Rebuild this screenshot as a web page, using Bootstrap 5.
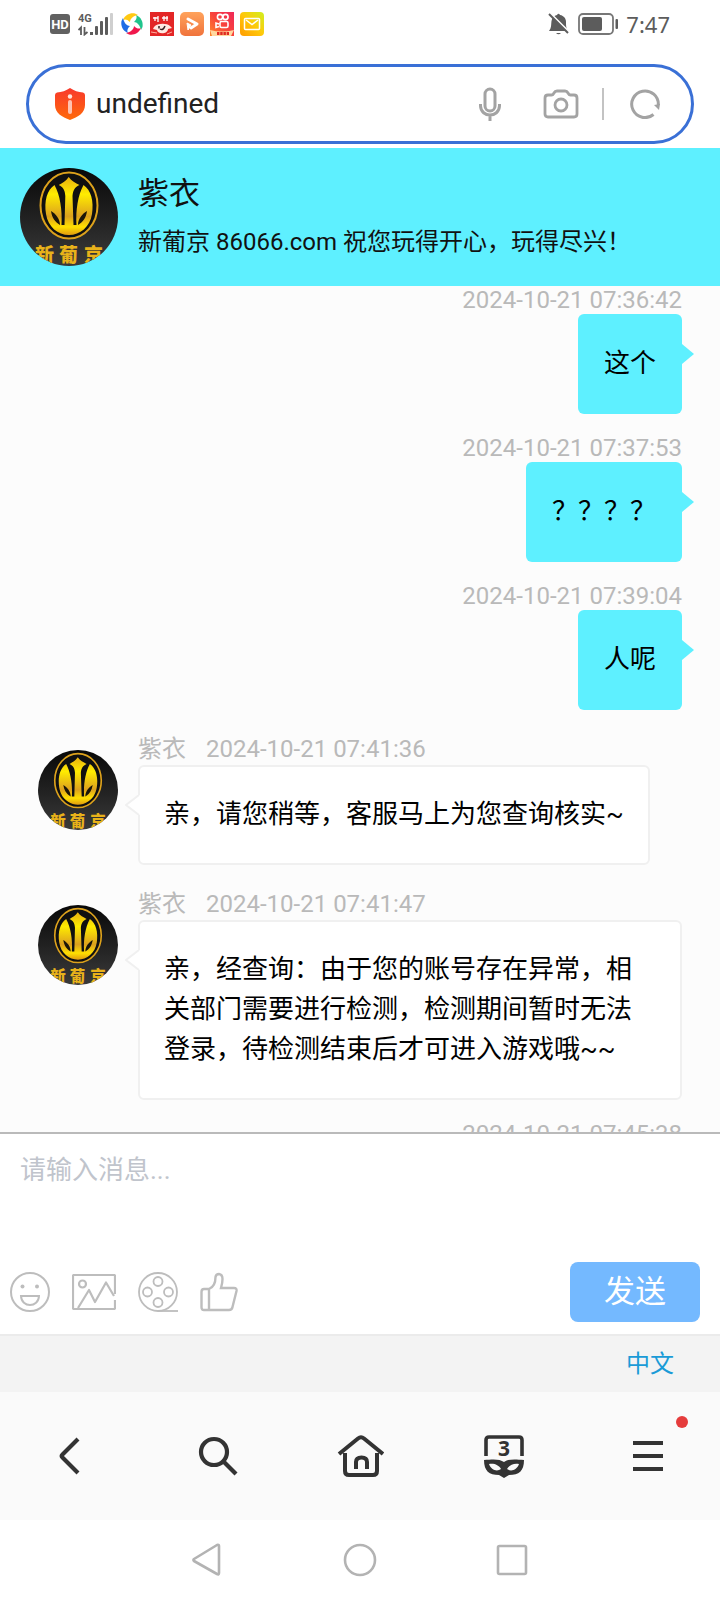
<!DOCTYPE html>
<html lang="zh-CN">
<head>
<meta charset="utf-8">
<meta name="viewport" content="width=device-width, initial-scale=1">
<title>紫衣</title>
<link href="https://cdn.jsdelivr.net/npm/bootstrap@5.3.0/dist/css/bootstrap.min.css" rel="stylesheet">
<style>
  body { font-family: Roboto, "Noto Sans CJK SC", sans-serif; color: #111; background: #fff; }
  svg { display: block; flex: none; }
  button { color: inherit; }
  .status-bar { height: 48px; padding: 0 50px; }
  .status-time { font: 22px/24px "Noto Sans", sans-serif; color: #5c5c5c; }
  .signal-icon { margin-right: 2px; }
  .app-icons { gap: 6px; }
  .address-bar { height: 80px; margin: 16px 26px 4px; padding: 0 31px 0 25px; border: 3px solid #3a70d6; border-radius: 40px; }
  .address-bar input { font-size: 28px; line-height: 40px; color: #222; outline: 0; min-width: 0; margin-left: 10px; }
  .address-bar .cam { margin-left: 41px; }
  .address-bar .vr { width: 2px; height: 32px; margin: 0 26px 0 23px; align-self: center; }
  .agent-head { background: #5ef0ff; padding: 20px; gap: 20px; }
  .agent-text { padding-top: 6px; }
  .agent-name { font-size: 31px; line-height: 40px; margin-bottom: 12px; font-weight: 400; }
  .agent-note { font-size: 24px; line-height: 32px; margin: 0; }
  .chat-pane { background: #fcfcfc; padding: 0 38px; min-height: 0; overflow-y: auto; scrollbar-width: none; }
  .chat-pane::-webkit-scrollbar { display: none; }
  .msg-out, .msg-in { margin-bottom: 20px; }
  .stamp { font-size: 24px; line-height: 28px; color: #b9b9b9; white-space: nowrap; }
  .msg-in { gap: 20px; }
  .msg-in .avatar { margin-top: 20px; }
  .msg-in .stamp { line-height: 31px; padding-top: 4px; }
  .stamp span { margin-right: 20px; }
  .bubble { position: relative; font-size: 26px; line-height: 40px; border-radius: 6px; padding: 29px 26px 31px; color: #000; }
  .msg-out .bubble { background: #5ef0ff; }
  .msg-out .bubble::after { content: ""; position: absolute; left: 100%; top: 30px; border: 10px solid transparent; border-left: 12px solid #5ef0ff; border-right: 0; }
  .msg-in .bubble { background: #fff; border: 2px solid #f0f0f0; padding: 27px 24px 29px; }
  .tail { position: absolute; right: 100%; top: 28px; }
  .composer { border-top: 2px solid #bababa; border-bottom: 2px solid #ebebeb; }
  .composer textarea { height: 118px; padding: 16px 20px; font-size: 26px; line-height: 40px; resize: none; outline: 0; }
  .composer textarea::placeholder { color: #c0c4cc; opacity: 1; }
  .tool-row { padding: 10px 20px 12px 10px; }
  .tool-icons { gap: 22px; }
  .btn-send { width: 130px; height: 60px; padding: 0; border-radius: 8px; font-size: 31px; line-height: 60px; --bs-btn-bg: #74b9ff; --bs-btn-color: #fff; --bs-btn-border-width: 0; --bs-btn-hover-bg: #5daaf8; --bs-btn-hover-color: #fff; }
  .lang-bar { height: 56px; background: #f3f3f3; padding: 0 46px; }
  .lang-bar a { font-size: 24px; line-height: 36px; color: #1a9bd7; }
  .browser-nav { height: 128px; background: #fafafa; }
  .browser-nav .dot { position: absolute; left: 50%; top: 24px; margin-left: 28px; width: 12px; height: 12px; background: #e53c3c; }
  .system-nav { height: 80px; gap: 118px; }
</style>
</head>
<body>
<svg width="0" height="0" class="position-absolute" aria-hidden="true">
  <defs>
    <linearGradient id="night" x1="0" y1="0" x2="0" y2="1"><stop offset="0" stop-color="#080808"/><stop offset="1" stop-color="#3a3a3a"/></linearGradient>
    <linearGradient id="gold" x1="0" y1="0" x2="0" y2="1"><stop offset="0" stop-color="#e8b010"/><stop offset=".3" stop-color="#ffec00"/><stop offset=".68" stop-color="#dca01e"/><stop offset=".86" stop-color="#ffe000"/><stop offset="1" stop-color="#e09a10"/></linearGradient>
    <clipPath id="disc"><circle cx="49" cy="49" r="49"/></clipPath>
    <symbol id="logo" viewBox="0 0 98 98">
      <g clip-path="url(#disc)">
        <rect width="98" height="98" fill="url(#night)"/>
        <ellipse cx="49" cy="37.500" rx="28.500" ry="33" fill="#101010" stroke="#dda21c" stroke-width="2"/>
        <path fill="url(#gold)" d="M48.700 9C46 13 42.500 15 38.700 17C43 19 45 22 45.300 28L44.500 57H41.500C42.500 42 40 27 34.500 17C27 22 24 33 26 46C28 59 38 67 49 67C60 67 70 59 72 46C74 33 71 22 63.500 17C58 27 55.500 42 56.500 57H53.500L52.500 28C53 22 55 19 59.500 17C55.500 15 51.500 13 48.700 9Z"/>
        <path fill="#1b1608" d="M31 43C36 46 40 51 40 57C35 54 32 50 31 43ZM67 43C62 46 58 51 58 57C63 54 66 50 67 43Z"/>
        <text x="15" y="94" font-family="Noto Sans CJK SC, sans-serif" font-weight="900" font-size="19" fill="#e8b21a">新</text>
        <text x="39" y="94" font-family="Noto Sans CJK SC, sans-serif" font-weight="900" font-size="19" fill="#e8b21a">葡</text>
        <text x="64" y="94" font-family="Noto Sans CJK SC, sans-serif" font-weight="900" font-size="19" fill="#e8b21a">京</text>
      </g>
    </symbol>
    <linearGradient id="shield" x1="0" y1="0" x2="0" y2="1"><stop offset="0" stop-color="#f8382c"/><stop offset="1" stop-color="#ff6a0a"/></linearGradient>
    <linearGradient id="peach" x1="0" y1="0" x2="0" y2="1"><stop offset="0" stop-color="#ffa35c"/><stop offset="1" stop-color="#f0733c"/></linearGradient>
    <linearGradient id="kred" x1="0" y1="1" x2="1" y2="0"><stop offset="0" stop-color="#ff8a2a"/><stop offset=".5" stop-color="#f8443c"/><stop offset="1" stop-color="#f02858"/></linearGradient>
    <linearGradient id="mailbg" x1="0" y1="1" x2="1" y2="0"><stop offset="0" stop-color="#ff9a00"/><stop offset=".5" stop-color="#ffc80a"/><stop offset="1" stop-color="#d0f020"/></linearGradient>
  </defs>
</svg>

<div class="d-flex flex-column vh-100">
  <div class="status-bar flex-shrink-0 d-flex justify-content-between align-items-center">
    <div class="d-flex align-items-center">
      <svg width="20" height="20" viewBox="0 0 20 20" class="me-2"><rect width="20" height="20" rx="3" fill="#616161"/><text x="10" y="15" text-anchor="middle" font-family="Roboto, sans-serif" font-weight="700" font-size="13" fill="#fff">HD</text></svg>
      <svg width="36" height="24" viewBox="0 0 36 24" class="signal-icon"><text x="0" y="10" font-family="Roboto, sans-serif" font-weight="700" font-size="11" fill="#5c5c5c">4G</text><path d="M0.500 18 3 15.500V23M6.500 15V22.500L9.500 20" fill="none" stroke="#5c5c5c" stroke-width="1.800"/><g fill="#5c5c5c"><rect x="12" y="20" width="3" height="3"/><rect x="17" y="14" width="3" height="9" rx="1"/><rect x="22" y="9" width="3" height="14" rx="1"/><rect x="27" y="5" width="3" height="18" rx="1"/></g><rect x="32" y="1" width="3" height="22" rx="1" fill="#cfcfcf"/></svg>
      <div class="app-icons d-flex ms-1">
        <svg width="24" height="24" viewBox="0 0 24 24"><path d="M3 8C5 3 10 0.500 15 1.500L18 3C13 4 10 7 10 10C7 7 5 7 3 8Z" fill="#ffc912"/><path d="M16 3C21 5 23.500 10 22.500 15L21 18C20 13 17 10 14 10C17 7 17 5 16 3Z" fill="#20c48c"/><path d="M21 16C19 21 14 23.500 9 22.500L6 21C11 20 14 17 14 14C17 17 19 17 21 16Z" fill="#f0184c"/><path d="M8 21C3 19 0.500 14 1.500 9L3 6C4 11 7 14 10 14C7 17 7 19 8 21Z" fill="#1e6ce6"/></svg>
        <svg width="24" height="24" viewBox="0 0 24 24"><rect width="24" height="24" fill="#e32626"/><g fill="none" stroke="#fff"><path d="M5 5V9M3 6H8M8 4V10M14 4V9M12 6H18M17 4V9" stroke-width="1.300"/></g><path d="M4 15C7 11 17 11 20 14L22 16 18 17C18 22 8 23 7 18L3 17Z" fill="#ffe9e2"/><path d="M9 14V16.500M10 17Q13 19 15 14" stroke="#352020" stroke-width="1.500" fill="none"/><path d="M1 20L7 21M22 20L17 22" stroke="#ffb0a0"/></svg>
        <svg width="24" height="24" viewBox="0 0 24 24"><rect width="24" height="24" rx="5" fill="url(#peach)"/><path d="M8 7L17 12L11 16" fill="none" stroke="#fff" stroke-width="3" stroke-linecap="round" stroke-linejoin="round"/><path d="M7 11L11 13 8 18Z" fill="#fff" stroke="#fff" stroke-linejoin="round"/></svg>
        <svg width="24" height="24" viewBox="0 0 24 24"><rect width="24" height="24" fill="url(#kred)"/><g fill="none" stroke="#fff" stroke-width="1.600"><circle cx="10" cy="5" r="2.600"/><circle cx="15.500" cy="5" r="2.600"/><rect x="10" y="9.500" width="8" height="6" rx="1.500"/><path d="M9 12L6 11V15.500L9 14.500"/></g><path d="M0 18Q12 21 24 18L21 24H2Z" fill="#ffd9a0"/><path d="M7 21.500H19" stroke="#e02a20" stroke-width="3" stroke-dasharray="2.500 .7"/></svg>
        <svg width="24" height="24" viewBox="0 0 24 24"><rect width="24" height="24" rx="4" fill="url(#mailbg)"/><rect x="4.500" y="6.500" width="15" height="11" rx="1" fill="none" stroke="#fff" stroke-width="1.500"/><path d="M6 8L12 12.500L18 8" fill="none" stroke="#fff" stroke-width="1.500"/></svg>
      </div>
    </div>
    <div class="d-flex align-items-center">
      <svg width="22" height="22" viewBox="0 0 22 22" class="me-2"><path d="M1 18C3.500 15 3 12 3.500 8C4 4.500 6 2.500 9 2Q10.500-.5 12 2C16 2.500 18 6 18 9C18 13 18 15 20.500 18Z" fill="#5c5c5c"/><path d="M2 0L22 20" stroke="#fff" stroke-width="2"/><path d="M1 1L20 20" stroke="#5c5c5c" stroke-width="2"/><path d="M8 20H13Q10.500 22.500 8 20Z" fill="#5c5c5c"/></svg>
      <svg width="40" height="22" viewBox="0 0 40 22" class="me-2"><rect x="1" y="1" width="34" height="20" rx="4" fill="none" stroke="#777" stroke-width="1.800"/><rect x="4" y="4" width="20" height="14" rx="2" fill="#5c5c5c"/><rect x="37.500" y="6" width="2.500" height="10" rx="1" fill="#5c5c5c"/></svg>
      <span class="status-time">7:47</span>
    </div>
  </div>

  <form class="address-bar flex-shrink-0 d-flex align-items-center">
    <svg width="32" height="34" viewBox="0 0 32 34"><path d="M16 1Q22 5 29 5.500Q31 6 31 8V18C31 26 24 30 16 33C8 30 1 26 1 18V8Q1 6 3 5.500Q10 5 16 1Z" fill="url(#shield)"/><circle cx="16" cy="9.500" r="2.200" fill="#ffe3dc"/><path d="M16 15V25" stroke="#ffc2b0" stroke-width="4" stroke-linecap="round"/></svg>
    <input class="border-0 bg-transparent flex-grow-1 p-0" type="text" value="undefined" aria-label="网址">
    <button type="button" class="btn p-0 border-0" aria-label="语音"><svg width="24" height="34" viewBox="0 0 24 34" fill="none" stroke="#a3a3a3" stroke-width="3"><rect x="7" y="2" width="10" height="22" rx="5"/><path d="M2.500 17V19C3 31 21 31 21.500 19V17M12 28V34"/></svg></button>
    <button type="button" class="btn p-0 border-0 cam" aria-label="拍照"><svg width="36" height="30" viewBox="0 0 36 30" fill="none" stroke="#a3a3a3" stroke-width="2.800"><path d="M5 6H8.500Q10 6 11 4Q12 2 14 2H22Q24 2 25 4Q26 6 27.500 6H31Q34 6 34 9V25Q34 28 31 28H5Q2 28 2 25V9Q2 6 5 6Z"/><circle cx="18" cy="16" r="6"/></svg></button>
    <span class="vr"></span>
    <button type="button" class="btn p-0 border-0" aria-label="刷新"><svg width="30" height="30" viewBox="0 0 30 30"><path d="M23.500 25.500A13.300 13.300 0 1 1 28.300 16" fill="none" stroke="#a3a3a3" stroke-width="3"/><path d="M24 16L30 15 29 21Z" fill="#a3a3a3"/></svg></button>
  </form>

  <header class="agent-head flex-shrink-0 d-flex">
    <svg width="98" height="98" role="img" aria-label="新葡京"><use href="#logo"/></svg>
    <div class="agent-text">
      <h1 class="agent-name">紫衣</h1>
      <p class="agent-note">新葡京 86066.com 祝您玩得开心，玩得尽兴！</p>
    </div>
  </header>

  <main class="chat-pane flex-grow-1">
    <div class="msg-out d-flex flex-column align-items-end"><time class="stamp">2024-10-21 07:36:42</time><div class="bubble">这个</div></div>
    <div class="msg-out d-flex flex-column align-items-end"><time class="stamp">2024-10-21 07:37:53</time><div class="bubble">？？？？</div></div>
    <div class="msg-out d-flex flex-column align-items-end"><time class="stamp">2024-10-21 07:39:04</time><div class="bubble">人呢</div></div>
    <div class="msg-in d-flex">
      <svg class="avatar" width="80" height="80"><use href="#logo"/></svg>
      <div class="d-flex flex-column align-items-start">
        <div class="stamp"><span>紫衣</span><time>2024-10-21 07:41:36</time></div>
        <div class="bubble"><svg class="tail" width="15" height="20" viewBox="0 0 15 20"><path d="M15 0H13L1 10 13 20H15Z" fill="#fff"/><path d="M14 0 1 10 14 20" fill="none" stroke="#f0f0f0" stroke-width="2"/></svg>亲，请您稍等，客服马上为您查询核实~</div>
      </div>
    </div>
    <div class="msg-in d-flex">
      <svg class="avatar" width="80" height="80"><use href="#logo"/></svg>
      <div class="d-flex flex-column align-items-start">
        <div class="stamp"><span>紫衣</span><time>2024-10-21 07:41:47</time></div>
        <div class="bubble"><svg class="tail" width="15" height="20" viewBox="0 0 15 20"><path d="M15 0H13L1 10 13 20H15Z" fill="#fff"/><path d="M14 0 1 10 14 20" fill="none" stroke="#f0f0f0" stroke-width="2"/></svg>亲，经查询：由于您的账号存在异常，相关部门需要进行检测，检测期间暂时无法登录，待检测结束后才可进入游戏哦~~</div>
      </div>
    </div>
    <div class="d-flex flex-column align-items-end"><time class="stamp">2024-10-21 07:45:38</time></div>
  </main>

  <form class="composer flex-shrink-0">
    <textarea class="d-block w-100 border-0" placeholder="请输入消息..." aria-label="消息"></textarea>
    <div class="tool-row d-flex justify-content-between align-items-center">
      <div class="tool-icons d-flex align-items-center">
        <button type="button" class="btn p-0 border-0" aria-label="表情"><svg width="40" height="40" viewBox="0 0 40 40" fill="none" stroke="#bdbdbd" stroke-width="2"><circle cx="20" cy="20" r="19"/><circle cx="12.500" cy="14.500" r="2" fill="#bdbdbd" stroke="none"/><circle cx="27" cy="14.500" r="2" fill="#bdbdbd" stroke="none"/><path d="M11 24H29C28.500 36 11.500 36 11 24Z"/></svg></button>
        <button type="button" class="btn p-0 border-0" aria-label="图片"><svg width="44" height="36" viewBox="0 0 44 36" fill="none" stroke="#bdbdbd" stroke-width="2.200"><path d="M43 20V2Q43 1 42 1H2Q1 1 1 2V34Q1 35 2 35H42Q43 35 43 34V26"/><circle cx="10.500" cy="10" r="3.500"/><path d="M6 34L17 16 23 28 34 8.500 42 22" stroke-linejoin="round"/></svg></button>
        <button type="button" class="btn p-0 border-0" aria-label="视频"><svg width="40" height="40" viewBox="0 0 40 40" fill="none" stroke="#bdbdbd" stroke-width="1.800"><circle cx="20" cy="20" r="19"/><circle cx="20" cy="9.500" r="4.500"/><circle cx="9.500" cy="20" r="4.500"/><circle cx="30.500" cy="20" r="4.500"/><circle cx="20" cy="30.500" r="4.500"/><path d="M20 39H40"/></svg></button>
        <button type="button" class="btn p-0 border-0" aria-label="点赞"><svg width="38" height="40" viewBox="0 0 38 40" fill="none" stroke="#bdbdbd" stroke-width="2.400"><path d="M4 17H9C14 15 15.500 10 15.500 5Q16 2 19 2Q22.500 2.500 22.500 7Q22.500 11 21 16H34Q37 16 36.500 19L32.500 35Q32 38 29 38H4Q1.500 38 1.500 35V20Q1.500 17 4 17ZM9 17V38"/></svg></button>
      </div>
      <button type="button" class="btn btn-send">发送</button>
    </div>
  </form>

  <div class="lang-bar flex-shrink-0 d-flex justify-content-end align-items-center"><a href="#" class="text-decoration-none">中文</a></div>

  <nav class="browser-nav flex-shrink-0 row row-cols-5 g-0 align-items-center" aria-label="浏览器">
    <div class="col d-flex justify-content-center"><button class="btn p-0 border-0" aria-label="后退"><svg width="28" height="40" viewBox="0 0 28 40" fill="none" stroke="#333" stroke-width="4.200"><path d="M20 3 4.500 18.500Q3 20 4.500 21.500L20 37"/></svg></button></div>
    <div class="col d-flex justify-content-center"><button class="btn p-0 border-0" aria-label="搜索"><svg width="44" height="40" viewBox="-4 0 44 40" fill="none" stroke="#333" stroke-width="4.200"><circle cx="16" cy="16" r="13"/><path d="M25 25 38 38"/></svg></button></div>
    <div class="col d-flex justify-content-center"><button class="btn p-0 border-0" aria-label="主页"><svg width="48" height="44" viewBox="0 0 48 44" fill="none" stroke="#333" stroke-width="4"><path d="M3 20 22 4.500Q25 2 28 4.500L47 20M9 19V37Q9 41 13 41H37Q41 41 41 37V19M20 35V28Q20 23.500 25.500 23.500Q31 23.500 31 28V35"/></svg></button></div>
    <div class="col d-flex justify-content-center"><button class="btn p-0 border-0" aria-label="标签页"><svg width="40" height="44" viewBox="0 0 40 44"><path d="M2 22V6Q2 3 5 3H35Q38 3 38 6V22" fill="none" stroke="#333" stroke-width="3.600"/><text x="20" y="22" text-anchor="middle" font-family="Noto Sans, sans-serif" font-weight="700" font-size="21" fill="#333">3</text><path d="M0 26C10 25 16 25 20 28C24 25 30 25 40 26C40 37 35 41 25 41L20 44 15 41C5 41 0 37 0 26Z" fill="#333"/><path d="M5 30C10 29 15 31 17 35C13 38 7 36 5 30ZM35 30C30 29 25 31 23 35C27 38 33 36 35 30Z" fill="#fafafa"/></svg></button></div>
    <div class="col h-100 d-flex justify-content-center align-items-center position-relative"><button class="btn p-0 border-0" aria-label="菜单"><svg width="30" height="30" viewBox="0 0 30 30" fill="#333"><path d="M0 0H30V4H0ZM0 13H30V17H0ZM0 26H30V30H0Z"/></svg></button><span class="dot rounded-circle"></span></div>
  </nav>

  <nav class="system-nav flex-shrink-0 d-flex justify-content-center align-items-center" aria-label="系统">
    <button class="btn p-0 border-0" aria-label="返回"><svg width="34" height="34" viewBox="0 0 34 34" fill="none" stroke="#b3b3b3" stroke-width="2.600" stroke-linejoin="round"><path d="M3 16 26 2Q28 1.500 28 3V30Q28 32 26 31L3 18Q2 17 3 16Z"/></svg></button>
    <button class="btn p-0 border-0" aria-label="桌面"><svg width="34" height="34" viewBox="0 0 34 34" fill="none" stroke="#b3b3b3" stroke-width="2.600"><circle cx="17" cy="17" r="15"/></svg></button>
    <button class="btn p-0 border-0" aria-label="最近任务"><svg width="34" height="34" viewBox="0 0 34 34" fill="none" stroke="#b3b3b3" stroke-width="2.600"><rect x="3" y="3" width="28" height="28" rx="1.500"/></svg></button>
  </nav>
</div>
<script src="https://cdn.jsdelivr.net/npm/bootstrap@5.3.0/dist/js/bootstrap.bundle.min.js"></script>
</body>
</html>
